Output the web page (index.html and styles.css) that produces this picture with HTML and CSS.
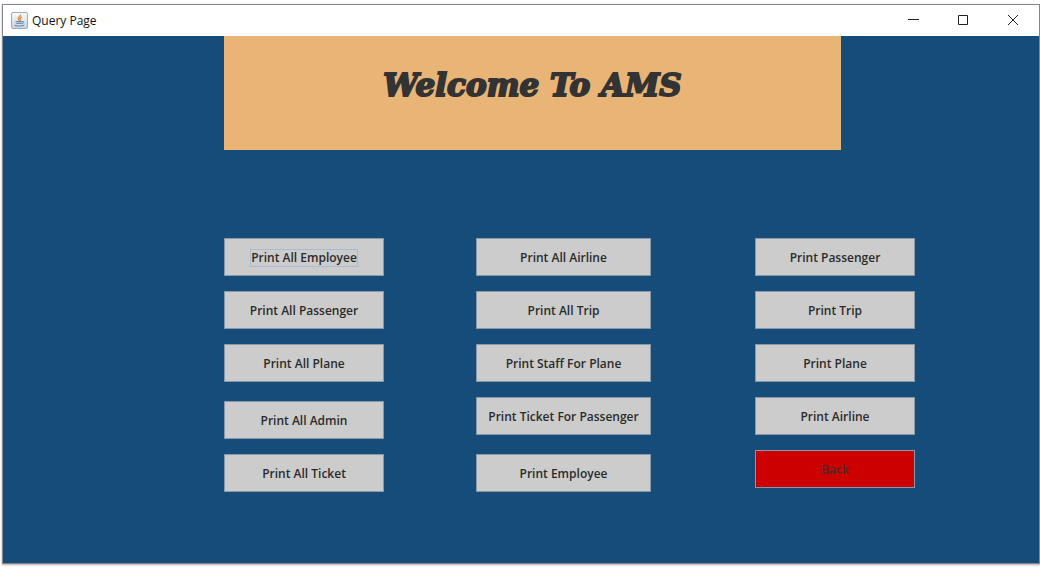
FILE: index.html
```html
<!DOCTYPE html>
<html lang="en">
<head>
<meta charset="utf-8">
<title>Query Page</title>
<link rel="stylesheet" href="styles.css">
</head>
<body>
<div class="window">
  <header class="titlebar">
    <svg class="app-icon" viewBox="0 0 17 17" aria-hidden="true">
      <defs><linearGradient id="tile" x1="0" y1="0" x2="0" y2="1"><stop offset="0" stop-color="#fafbfc"/><stop offset="1" stop-color="#c3d5e3"/></linearGradient></defs>
      <rect x=".5" y=".5" width="16" height="16" rx="1.5" fill="url(#tile)" stroke="#9dabb8"/>
      <path d="M9.500 2.500C10 4.500 6.500 5 7.200 6.800 7.500 7.600 8.300 8 8.200 9M10.800 4.800C8.800 5.600 8.800 6.500 9.400 7.300 9.800 8 9.200 8.500 9 9" fill="none" stroke="#e58a45" stroke-width="1.400"/>
      <path d="M4.500 9.700h6.700M5.300 11.300h5.500M11.200 9.500c2.200-.4 2 1.700-.2 2M3.500 13.300c2 1 7.500 1 9.800-.2" fill="none" stroke="#587fa5" stroke-width="1"/>
    </svg>
    <span class="title">Query Page</span>
    <div class="controls">
      <button type="button" aria-label="Minimize"><svg viewBox="0 0 12 12"><path d="M1 5.500h11"/></svg></button>
      <button type="button" aria-label="Maximize"><svg viewBox="0 0 12 12"><path d="M1.500 1.500h9v9h-9z"/></svg></button>
      <button type="button" aria-label="Close"><svg viewBox="0 0 12 12"><path d="M1 1l10 10M11 1L1 11"/></svg></button>
    </div>
  </header>
  <main class="content">
    <div class="banner"><h1>Welcome To AMS</h1></div>
    <div class="actions">
      <div class="column employees">
        <button type="button" class="action"><span class="focused">Print All Employee</span></button>
        <button type="button" class="action">Print All Passenger</button>
        <button type="button" class="action">Print All Plane</button>
        <button type="button" class="action spaced">Print All Admin</button>
        <button type="button" class="action">Print All Ticket</button>
      </div>
      <div class="column flights">
        <button type="button" class="action">Print All Airline</button>
        <button type="button" class="action">Print All Trip</button>
        <button type="button" class="action">Print Staff For Plane</button>
        <button type="button" class="action">Print Ticket For Passenger</button>
        <button type="button" class="action spaced">Print Employee</button>
      </div>
      <div class="column records">
        <button type="button" class="action">Print Passenger</button>
        <button type="button" class="action">Print Trip</button>
        <button type="button" class="action">Print Plane</button>
        <button type="button" class="action">Print Airline</button>
        <button type="button" class="action back">Back</button>
      </div>
    </div>
  </main>
</div>
</body>
</html>
```
FILE: styles.css
```css
* { box-sizing: border-box; }
body {
  margin: 0;
  padding: 4px 0 3px 2px;
  min-height: 100vh;
  display: flex;
  background: #fff;
  font-family: "Open Sans", "Noto Sans", sans-serif;
}
.window {
  flex: 1;
  display: flex;
  flex-direction: column;
  border: 1px solid #85878a;
  box-shadow: 0 1px 2px #aaa;
}
.titlebar {
  display: flex;
  align-items: center;
  height: 31px;
  padding-left: 8px;
  background: #fff;
}
.app-icon { width: 17px; height: 17px; }
.title {
  margin-left: 4px;
  font-size: 12px;
  line-height: 16px;
  color: #111;
}
.controls { display: flex; align-self: stretch; margin-left: auto; padding-right: 1px; }
.controls button {
  display: flex;
  align-items: center;
  justify-content: center;
  width: 50px;
  padding: 0 0 1px;
  border: 0;
  background: none;
}
.controls svg { width: 12px; height: 12px; fill: none; stroke: #222; stroke-width: 1; }
.content { flex: 1; background: #154c79; }
.banner { display: grid; grid-template-columns: 221fr 617fr 198fr; }
.banner h1 {
  grid-column: 2;
  height: 114px;
  margin: 0;
  padding-top: 31px;
  background: #e9b576;
  color: #333;
  -webkit-text-stroke: 2px #333;
  font: italic 900 31px/36px "DejaVu Serif", serif;
  text-align: center;
}
.actions {
  display: grid;
  grid-template-columns: 221fr 160px 92fr 175px 104fr 160px 124fr;
  padding: 88px 0 24px;
}
.column { display: flex; flex-direction: column; gap: 15px; }
.employees { grid-column: 2; }
.flights { grid-column: 4; }
.records { grid-column: 6; }
.action {
  height: 38px;
  padding: 1px 0 0;
  border: 1px solid #8798a7;
  background: #ccc;
  color: #2b2b2b;
  font: 600 12px/16px "Open Sans", "Noto Sans", sans-serif;
}
.spaced { margin-top: 4px; }
.focused { display: inline-block; border: 1px solid #a9bdd2; }
.back { background: #c00; color: #4b2b2b; }
```
